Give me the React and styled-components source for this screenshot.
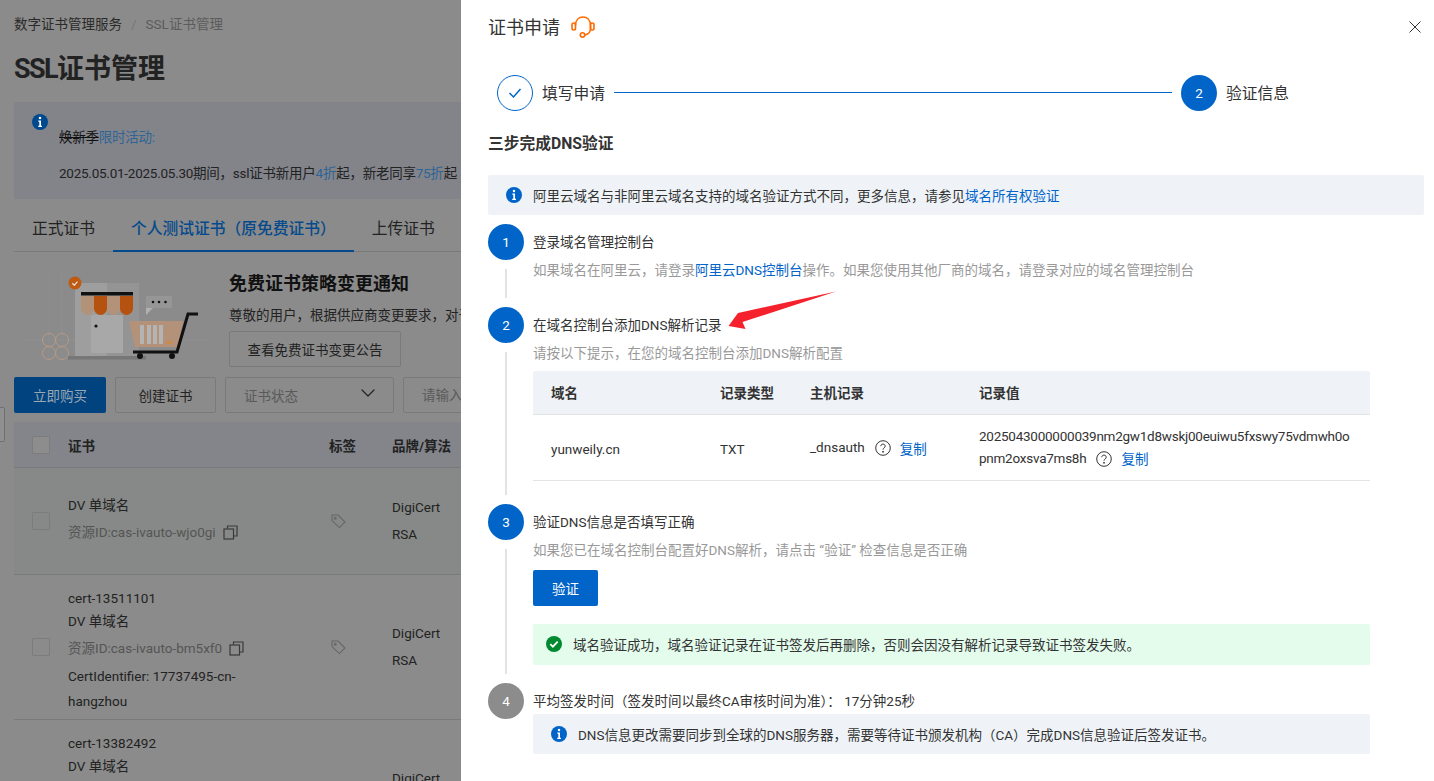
import React from "react";
import styled, { createGlobalStyle } from "styled-components";
import { ChevronDown } from "lucide-react";

const GlobalStyle = createGlobalStyle`
  html, body {
    margin: 0;
    padding: 0;
    background: #8b8b8b;
    font-family: Roboto, "Noto Sans CJK SC", sans-serif;
    font-size: 13.5px;
    color: #333;
  }
  * { box-sizing: border-box; }
`;

const InfoIcon = ({ color = "#0064c8", size = 16 }) => (
  <svg width={size} height={size} viewBox="0 0 16 16" style={{ flexShrink: 0 }}>
    <circle cx="8" cy="8" r="8" fill={color} />
    <circle cx="8" cy="4.1" r="1.25" fill="#fff" />
    <path d="M6.3 6.6h2.7v5.2h1v1.1H6.2v-1.1h1.1V7.7h-1z" fill="#fff" />
  </svg>
);

const HelpIcon = () => (
  <svg width="16" height="16" viewBox="0 0 16 16" fill="none" stroke="#333" strokeWidth="1">
    <circle cx="8" cy="8" r="7.3" />
    <path d="M5.8 6.2c0-1.3 1-2.1 2.2-2.1s2.2.8 2.2 2c0 1.9-2.2 1.7-2.2 3.6" />
    <circle cx="8" cy="11.8" r=".5" fill="#333" />
  </svg>
);

const CopyIcon = () => (
  <svg width="15" height="15" viewBox="0 0 15 15" fill="none" stroke="#3a3a3a" strokeWidth="1.2">
    <rect x="1" y="4" width="9.5" height="10" />
    <path d="M4.5 3.5V1h9.5v10h-3" />
  </svg>
);

const TagIcon = () => (
  <svg width="15" height="15" viewBox="0 0 15 15" fill="none" stroke="#666" strokeWidth="1.1">
    <path d="M1 1h6l7 7-5.6 5.6-7.4-7z" />
    <circle cx="4.2" cy="4.2" r="1" />
  </svg>
);

const Illustration = () => (
  <svg width="215" height="110" viewBox="14 262 215 110" style={{ flexShrink: 0 }}>
    <g stroke="#8e8e8e" strokeWidth="1">
      <path d="M24 340h186M49 272v90M62 272v90M50 340h130" />
    </g>
    <rect x="75" y="283" width="32" height="73" fill="#9e9e9e" />
    <rect x="107" y="283" width="32" height="73" fill="#949494" />
    <rect x="91" y="315" width="32" height="38" fill="#a8a8a8" />
    <circle cx="96" cy="326" r="1.6" fill="#111" />
    <path d="M81 296h13v12.500a6.500 6.500 0 0 1-13 0z" fill="#b3927a" />
    <path d="M94 296h13v12.500a6.500 6.500 0 0 1-13 0z" fill="#b5520f" />
    <path d="M107 296h13v12.500a6.500 6.500 0 0 1-13 0z" fill="#b3927a" />
    <path d="M120 296h13v12.500a6.500 6.500 0 0 1-13 0z" fill="#b5520f" />
    <rect x="81" y="292" width="52" height="3.5" fill="#111" />
    <circle cx="75" cy="283" r="6.5" fill="#bf5a10" />
    <path d="M72.300 283.200l2 2 3.200-3.600" fill="none" stroke="#ddd" strokeWidth="1.300" />
    <rect x="146" y="296" width="26" height="12" fill="#969696" />
    <path d="M146 308h7l-7 7z" fill="#b0b0b0" />
    <g fill="#111">
      <circle cx="153" cy="302" r="1.3" />
      <circle cx="159" cy="302" r="1.3" />
      <circle cx="165.500" cy="302" r="1.3" />
    </g>
    <path d="M129 321h54l-5 26h-43z" fill="#b4927a" />
    <g fill="#b4b4b4">
      <rect x="140" y="325" width="4" height="19" />
      <rect x="147" y="325" width="4" height="19" />
      <rect x="153" y="325" width="4" height="19" />
      <rect x="159" y="325" width="4" height="19" />
    </g>
    <rect x="166" y="341" width="6" height="3" fill="#c98a4f" />
    <g fill="none" stroke="#b79a85" strokeWidth="1">
      <circle cx="49" cy="340" r="6.500" />
      <circle cx="62" cy="340" r="6.500" />
      <circle cx="49" cy="353" r="6.500" />
      <circle cx="62" cy="353" r="6.500" />
    </g>
    <rect x="68" y="356" width="78" height="3.500" fill="#777" />
    <path d="M198 314h-10l-11 38h-44" fill="none" stroke="#111" strokeWidth="3" />
    <circle cx="140" cy="356" r="3" fill="#111" />
    <circle cx="172" cy="356" r="3" fill="#111" />
  </svg>
);

const Screen = styled.div`
  position: relative;
  width: 100%;
  height: 781px;
  overflow: hidden;
  background: #8b8b8b;
`;

const Page = styled.div`
  display: flex;
  flex-direction: column;
  width: 100%;
  padding: 14px 0 0 14px;
  color: #1f1f1f;
`;

const Breadcrumb = styled.div`
  display: flex;
  gap: 9px;
  line-height: 20px;
  color: #2a2a2a;
  span:nth-child(2) { color: #777; }
  span:nth-child(3) { color: #5c5c5c; }
`;

const PageTitle = styled.h1`
  margin: 17px 0 0;
  font-size: 27px;
  line-height: 36px;
  font-weight: 700;
  color: #222;
  span { letter-spacing: -1.6px; }
`;

const Notice = styled.div`
  display: flex;
  gap: 11px;
  height: 97px;
  margin-top: 15px;
  padding: 12px 0 0 18px;
  background: #83848a;
`;

const NoticeText = styled.div`
  padding-top: 12px;
  line-height: 22.5px;
  white-space: nowrap;
  letter-spacing: -0.25px;
  color: #222;
  p { margin: 0 0 13.5px; }
  s { color: #111; text-decoration-thickness: 1px; }
`;

const DimLink = styled.span`
  color: #2f6494;
`;

const Tabs = styled.div`
  display: flex;
  height: 45px;
  margin-top: 8px;
  border-bottom: 1px solid #7a7a7a;
`;

const Tab = styled.div`
  padding: 0 18px;
  height: 45px;
  line-height: 44px;
  font-size: 15.75px;
  color: ${(p) => (p.$active ? "#054a8c" : "#222")};
  font-weight: ${(p) => (p.$active ? 500 : 400)};
  border-bottom: ${(p) => (p.$active ? "2px solid #054a8c" : "none")};
`;

const Banner = styled.div`
  display: flex;
  padding-top: 10px;
`;

const BannerBody = styled.div`
  display: flex;
  flex-direction: column;
  align-items: flex-start;
  padding-top: 8px;
`;

const BannerTitle = styled.div`
  font-size: 18px;
  line-height: 27px;
  font-weight: 700;
  color: #111;
`;

const BannerDesc = styled.div`
  margin-top: 7px;
  line-height: 22.5px;
  white-space: nowrap;
  color: #222;
`;

const OutlineButton = styled.div`
  display: flex;
  align-items: center;
  justify-content: center;
  height: 36px;
  width: ${(p) => p.$width};
  margin-top: ${(p) => p.$top || 0};
  border: 1px solid #7a7a7a;
  border-radius: 2px;
  color: #222;
`;

const Toolbar = styled.div`
  display: flex;
  gap: 9px;
  margin-top: 5px;
`;

const PrimaryDim = styled.div`
  display: flex;
  align-items: center;
  justify-content: center;
  width: 92px;
  height: 36px;
  background: #00437f;
  border-radius: 2px;
  color: #9aa8b4;
`;

const SelectBox = styled.div`
  display: flex;
  align-items: center;
  justify-content: space-between;
  width: 169px;
  height: 36px;
  padding: 0 13px 0 18px;
  border: 1px solid #7a7a7a;
  border-radius: 2px;
  color: #5a5a5a;
  svg { color: #222; margin-top: -4px; }
`;

const SearchBox = styled.div`
  flex: 1;
  height: 36px;
  padding-left: 18px;
  line-height: 34px;
  border: 1px solid #7a7a7a;
  border-radius: 2px;
  color: #5a5a5a;
`;

const CertTable = styled.div`
  margin-top: 9px;
`;

const CertGrid = styled.div`
  display: grid;
  grid-template-columns: 54px 261px 63px 1fr;
  align-items: center;
  height: ${(p) => p.$height};
  background: ${(p) => p.$bg || "transparent"};
  border-bottom: 1px solid #7a7a7a;
`;

const HeadCell = styled.div`
  font-weight: 700;
  color: #222;
`;

const CheckBox = styled.div`
  width: 18px;
  height: 18px;
  margin-left: 18px;
  border: 1px solid #7c7c7c;
  border-radius: 1px;
  background: ${(p) => p.$bg || "transparent"};
`;

const CertCell = styled.div`
  align-self: start;
  padding-top: ${(p) => p.$top};
  color: #222;
`;

const CertLine = styled.div`
  line-height: 23px;
`;

const ResourceLine = styled.div`
  display: flex;
  align-items: center;
  gap: 7px;
  margin-top: 4px;
  line-height: 23px;
  color: #555;
`;

const IdentifierLine = styled.div`
  margin-top: 4px;
  line-height: 25px;
  width: 180px;
`;

const TagCell = styled.div`
  display: flex;
  padding-left: 2px;
`;

const BrandCell = styled.div`
  line-height: 27px;
  color: #222;
`;

const SideHandle = styled.div`
  position: absolute;
  left: 0;
  top: 407px;
  width: 5px;
  height: 35px;
  background: #909090;
  border: 1px solid #6f6f6f;
  border-left: none;
  border-radius: 0 2px 2px 0;
`;

const Drawer = styled.aside`
  position: absolute;
  top: 0;
  right: 0;
  bottom: 0;
  left: 461px;
  display: flex;
  flex-direction: column;
  padding: 0 10px 0 27px;
  background: #fff;
`;

const DrawerHeader = styled.header`
  display: flex;
  align-items: center;
  justify-content: space-between;
  height: 54px;
  padding-right: 3px;
`;

const DrawerTitle = styled.div`
  display: flex;
  align-items: center;
  gap: 10px;
  font-size: 18px;
  line-height: 27px;
  color: #333;
`;

const Stepper = styled.div`
  display: flex;
  align-items: center;
  height: 36px;
  margin-top: 21px;
  padding-left: 9px;
  width: 801px;
`;

const StepCircle = styled.div`
  display: flex;
  align-items: center;
  justify-content: center;
  flex-shrink: 0;
  width: 36px;
  height: 36px;
  border-radius: 50%;
  font-size: 13.5px;
  color: ${(p) => (p.$done ? "#0064c8" : "#fff")};
  background: ${(p) => (p.$done ? "#fff" : p.$gray ? "#8c8c8c" : "#0064c8")};
  border: ${(p) => (p.$done ? "1px solid #0064c8" : "none")};
`;

const StepName = styled.div`
  flex-shrink: 0;
  margin: -2px 0 0 9px;
  font-size: 15.75px;
  color: #333;
`;

const StepLine = styled.div`
  flex: 1;
  height: 1px;
  margin: -2px 9px 0;
  background: #0064c8;
`;

const Heading = styled.h2`
  margin: 21px 0 0;
  font-size: 15.75px;
  line-height: 24px;
  font-weight: 700;
  color: #333;
`;

const InfoBar = styled.div`
  display: flex;
  align-items: center;
  gap: 11px;
  height: 40px;
  margin-top: ${(p) => p.$top};
  padding-left: 18px;
  border-radius: 2px;
  background: ${(p) => (p.$success ? "#e3fcec" : "#eff3f8")};
  color: #333;
  white-space: nowrap;
`;

const Steps = styled.div`
  display: flex;
  flex-direction: column;
  margin-top: 9px;
`;

const Step = styled.section`
  display: flex;
  gap: 9px;
`;

const Rail = styled.div`
  display: flex;
  flex-direction: column;
  align-items: center;
  flex-shrink: 0;
  width: 36px;
`;

const RailLine = styled.div`
  flex: 1;
  width: 2px;
  margin: 9px 0;
  background: #e3e3e3;
`;

const StepBody = styled.div`
  flex: 1;
  padding-bottom: ${(p) => p.$bottom};
`;

const StepTitle = styled.div`
  line-height: 36px;
  color: #333;
`;

const StepDesc = styled.div`
  line-height: 20px;
  color: #999;
  white-space: nowrap;
`;

const Link = styled.a`
  color: #0064c8;
  text-decoration: none;
`;

const DnsTable = styled.div`
  width: 837px;
  margin-top: 8px;
`;

const DnsGrid = styled.div`
  display: grid;
  grid-template-columns: 169px 90px 169px 1fr;
  align-items: center;
  height: ${(p) => p.$height};
  padding-top: ${(p) => (p.$head ? "1px" : "0")};
  background: ${(p) => (p.$head ? "#eff3f8" : "#fff")};
  border-bottom: 1px solid #e3e4e6;
  border-radius: ${(p) => (p.$head ? "2px 2px 0 0" : 0)};
`;

const DnsCell = styled.div`
  padding: ${(p) => (p.$shift ? "3px 18px 0" : "0 18px")};
  font-weight: ${(p) => (p.$head ? 700 : 400)};
  line-height: 22.5px;
  color: #333;
`;

const HostRow = styled.div`
  display: flex;
  align-items: center;
  gap: 10px;
  white-space: nowrap;
  a { margin: 4px 0 0 -1px; }
`;

const RecordValue = styled.div`
  word-break: break-all;
  letter-spacing: -0.25px;
  svg { margin: 0 9px 0 10px; vertical-align: -4px; }
  a { vertical-align: -1px; letter-spacing: 0; }
`;

const VerifyButton = styled.button`
  display: block;
  width: 65px;
  height: 36px;
  margin-top: 10px;
  padding: 0;
  border: none;
  border-radius: 2px;
  background: #0064c8;
  color: #fff;
  font: inherit;
`;

const SuccessBar = styled(InfoBar)`
  width: 837px;
  height: 41px;
  padding: 0 0 2px 13px;
  gap: 11px;
`;

const NoteBar = styled(InfoBar)`
  width: 837px;
`;

const Arrow = styled.svg`
  position: absolute;
  left: 263px;
  top: 286px;
`;

const steps = {
  one: "如果域名在阿里云，请登录",
  two: "操作。如果您使用其他厂商的域名，请登录对应的域名管理控制台",
};

export default function App() {
  return (
    <Screen>
      <GlobalStyle />
      <Page>
        <Breadcrumb>
          <span>数字证书管理服务</span>
          <span>/</span>
          <span>SSL证书管理</span>
        </Breadcrumb>
        <PageTitle>
          <span>SSL</span>证书管理
        </PageTitle>
        <Notice>
          <InfoIcon color="#00498f" />
          <NoticeText>
            <p>
              <s>焕新季</s>
              <DimLink>限时活动:</DimLink>
            </p>
            <p>
              2025.05.01-2025.05.30期间，ssl证书新用户<DimLink>4折</DimLink>起，新老同享
              <DimLink>75折</DimLink>起
            </p>
          </NoticeText>
        </Notice>
        <Tabs>
          <Tab>正式证书</Tab>
          <Tab $active>个人测试证书（原免费证书）</Tab>
          <Tab>上传证书</Tab>
        </Tabs>
        <Banner>
          <Illustration />
          <BannerBody>
            <BannerTitle>免费证书策略变更通知</BannerTitle>
            <BannerDesc>尊敬的用户，根据供应商变更要求，对于免费证书的有效期进行调整</BannerDesc>
            <OutlineButton $width="172px" $top="4px">查看免费证书变更公告</OutlineButton>
          </BannerBody>
        </Banner>
        <Toolbar>
          <PrimaryDim>立即购买</PrimaryDim>
          <OutlineButton $width="101px">创建证书</OutlineButton>
          <SelectBox>
            证书状态
            <ChevronDown size={24} strokeWidth={1.2} />
          </SelectBox>
          <SearchBox>请输入</SearchBox>
        </Toolbar>
        <CertTable>
          <CertGrid $height="46px" $bg="#83858b">
            <CheckBox $bg="#8d8d8d" />
            <HeadCell>证书</HeadCell>
            <HeadCell>标签</HeadCell>
            <HeadCell>品牌/算法</HeadCell>
          </CertGrid>
          <CertGrid $height="107px" $bg="#868987">
            <CheckBox />
            <CertCell $top="26px">
              <CertLine>DV 单域名</CertLine>
              <ResourceLine>
                资源ID:cas-ivauto-wjo0gi <CopyIcon />
              </ResourceLine>
            </CertCell>
            <TagCell>
              <TagIcon />
            </TagCell>
            <BrandCell>
              DigiCert
              <br />
              RSA
            </BrandCell>
          </CertGrid>
          <CertGrid $height="145px">
            <CheckBox />
            <CertCell $top="12px">
              <CertLine>cert-13511101</CertLine>
              <CertLine>DV 单域名</CertLine>
              <ResourceLine>
                资源ID:cas-ivauto-bm5xf0 <CopyIcon />
              </ResourceLine>
              <IdentifierLine>CertIdentifier: 17737495-cn-hangzhou</IdentifierLine>
            </CertCell>
            <TagCell>
              <TagIcon />
            </TagCell>
            <BrandCell>
              DigiCert
              <br />
              RSA
            </BrandCell>
          </CertGrid>
          <CertGrid $height="145px">
            <CheckBox />
            <CertCell $top="12px">
              <CertLine>cert-13382492</CertLine>
              <CertLine>DV 单域名</CertLine>
            </CertCell>
            <TagCell>
              <TagIcon />
            </TagCell>
            <BrandCell>
              DigiCert
              <br />
              RSA
            </BrandCell>
          </CertGrid>
        </CertTable>
      </Page>
      <SideHandle />

      <Drawer>
        <DrawerHeader>
          <DrawerTitle>
            证书申请
            <svg width="26" height="24" viewBox="0 0 26 24" fill="none" stroke="#ff6a00" strokeWidth="1.6">
              <path d="M5.500 10.500C5.500 5 8.800 2 13 2s7.500 3 7.500 8.500v3c0 3.500-2.500 6-6 6.500" />
              <rect x="2" y="8" width="3.500" height="7" rx="1.700" />
              <rect x="20.500" y="8" width="3.500" height="7" rx="1.700" />
              <circle cx="12.500" cy="20" r="2.200" />
            </svg>
          </DrawerTitle>
          <svg width="12" height="12" viewBox="0 0 12 12" stroke="#333" strokeWidth="1" fill="none">
            <path d="M.5.500l11 11M11.500.500l-11 11" />
          </svg>
        </DrawerHeader>
        <Stepper>
          <StepCircle $done>
            <svg width="14" height="12" viewBox="0 0 14 12" fill="none" stroke="#0064c8" strokeWidth="1.5">
              <path d="M1.500 6l4 4 7-8" />
            </svg>
          </StepCircle>
          <StepName>填写申请</StepName>
          <StepLine />
          <StepCircle>2</StepCircle>
          <StepName>验证信息</StepName>
        </Stepper>
        <Heading>三步完成DNS验证</Heading>
        <InfoBar $top="19px">
          <InfoIcon />
          <span>
            阿里云域名与非阿里云域名支持的域名验证方式不同，更多信息，请参见<Link>域名所有权验证</Link>
          </span>
        </InfoBar>
        <Steps>
          <Step>
            <Rail>
              <StepCircle>1</StepCircle>
              <RailLine />
            </Rail>
            <StepBody $bottom="27px">
              <StepTitle>登录域名管理控制台</StepTitle>
              <StepDesc>
                {steps.one}
                <Link>阿里云DNS控制台</Link>
                {steps.two}
              </StepDesc>
            </StepBody>
          </Step>
          <Step>
            <Rail>
              <StepCircle>2</StepCircle>
              <RailLine />
            </Rail>
            <StepBody $bottom="23px">
              <StepTitle>在域名控制台添加DNS解析记录</StepTitle>
              <StepDesc>请按以下提示，在您的域名控制台添加DNS解析配置</StepDesc>
              <DnsTable>
                <DnsGrid $head $height="44px">
                  <DnsCell $head>域名</DnsCell>
                  <DnsCell $head>记录类型</DnsCell>
                  <DnsCell $head>主机记录</DnsCell>
                  <DnsCell $head>记录值</DnsCell>
                </DnsGrid>
                <DnsGrid $height="66px">
                  <DnsCell $shift>yunweily.cn</DnsCell>
                  <DnsCell $shift>TXT</DnsCell>
                  <DnsCell>
                    <HostRow>
                      _dnsauth <HelpIcon />
                      <Link>复制</Link>
                    </HostRow>
                  </DnsCell>
                  <DnsCell>
                    <RecordValue>
                      2025043000000039nm2gw1d8wskj00euiwu5fxswy75vdmwh0opnm2oxsva7ms8h
                      <HelpIcon />
                      <Link>复制</Link>
                    </RecordValue>
                  </DnsCell>
                </DnsGrid>
              </DnsTable>
            </StepBody>
          </Step>
          <Step>
            <Rail>
              <StepCircle>3</StepCircle>
              <RailLine />
            </Rail>
            <StepBody $bottom="18px">
              <StepTitle>验证DNS信息是否填写正确</StepTitle>
              <StepDesc>如果您已在域名控制台配置好DNS解析，请点击 “验证” 检查信息是否正确</StepDesc>
              <VerifyButton>验证</VerifyButton>
              <SuccessBar $success $top="18px">
                <svg width="16" height="16" viewBox="0 0 16 16">
                  <circle cx="8" cy="8" r="8" fill="#00892e" />
                  <path d="M4.300 8.200l2.600 2.500 4.800-5" fill="none" stroke="#fff" strokeWidth="1.800" />
                </svg>
                <span>域名验证成功，域名验证记录在证书签发后再删除，否则会因没有解析记录导致证书签发失败。</span>
              </SuccessBar>
            </StepBody>
          </Step>
          <Step>
            <Rail>
              <StepCircle $gray>4</StepCircle>
            </Rail>
            <StepBody>
              <StepTitle>平均签发时间（签发时间以最终CA审核时间为准）： 17分钟25秒</StepTitle>
              <NoteBar $top="-5px">
                <InfoIcon />
                <span>DNS信息更改需要同步到全球的DNS服务器，需要等待证书颁发机构（CA）完成DNS信息验证后签发证书。</span>
              </NoteBar>
            </StepBody>
          </Step>
        </Steps>
        <Arrow width="115" height="50" viewBox="0 0 115 50">
          <path d="M112 5.500L14 27 4.500 40l17 3-3-7z" fill="#f5222d" />
        </Arrow>
      </Drawer>
    </Screen>
  );
}
